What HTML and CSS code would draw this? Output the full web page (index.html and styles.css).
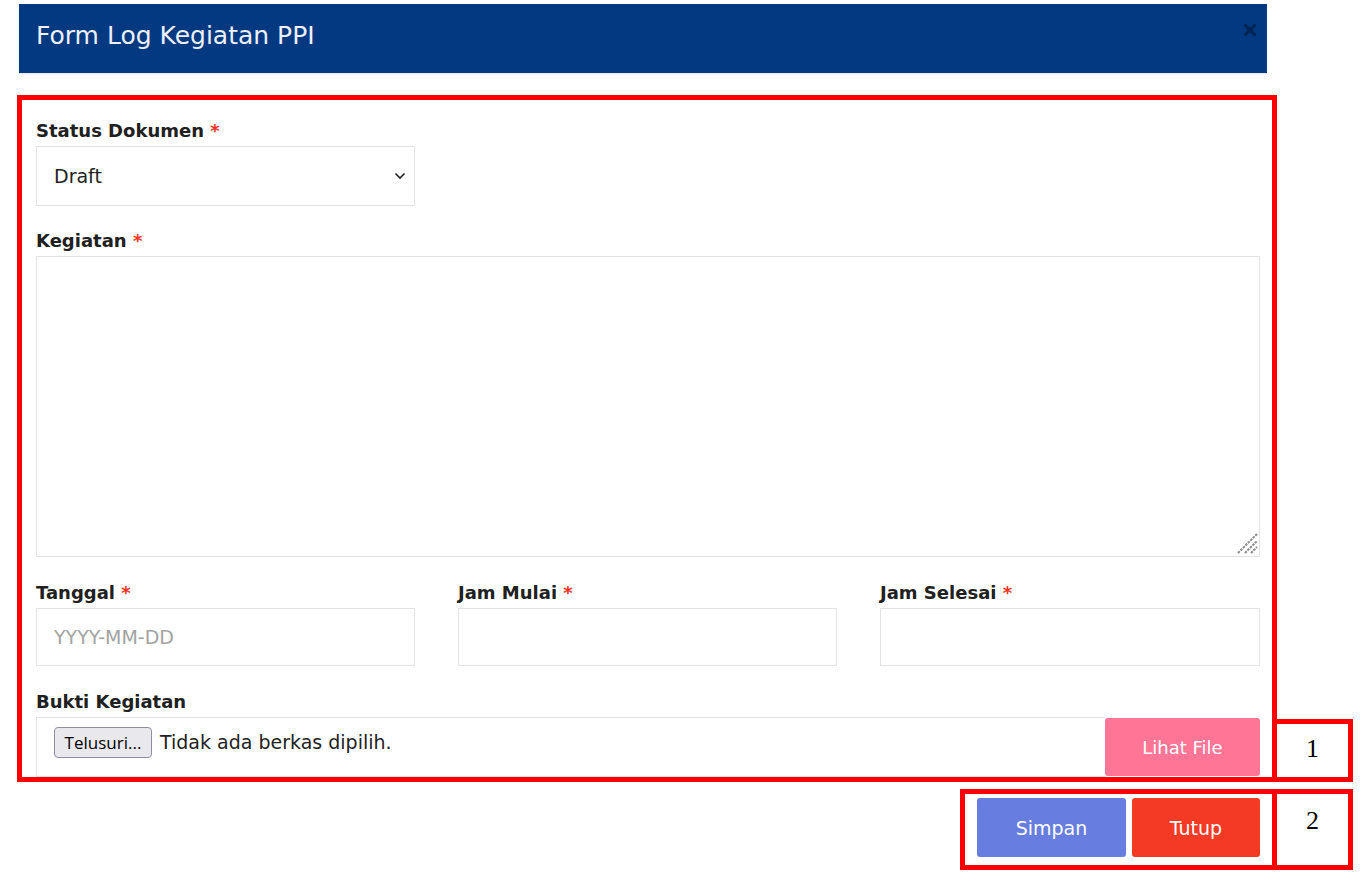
FILE: index.html
```html
<!DOCTYPE html>
<html lang="id">
<head>
<meta charset="utf-8">
<title>Form Log Kegiatan PPI</title>
<link rel="stylesheet" href="styles.css">
</head>
<body>
<div class="modal">
  <div class="modal-header">
    <h5 class="modal-title">Form Log Kegiatan PPI</h5>
    <button class="close" type="button" aria-label="Close">
      <svg width="16" height="16" viewBox="0 0 16 16"><path d="M2.5 2.5 L13.5 13.5 M13.5 2.5 L2.5 13.5" stroke="#000" stroke-width="3.2" stroke-linecap="butt"/></svg>
    </button>
  </div>
  <div class="modal-body">
    <div class="form-group first">
      <label class="label">Status Dokumen <span class="req">*</span></label>
      <div class="select-wrap">
        <select class="control select">
          <option>Draft</option>
        </select>
        <svg class="chevron" width="12" height="8" viewBox="0 0 12 8"><path d="M1.5 1.5 L6 6 L10.5 1.5" fill="none" stroke="#222" stroke-width="1.6"/></svg>
      </div>
    </div>
    <div class="form-group">
      <label class="label">Kegiatan <span class="req">*</span></label>
      <div class="textarea-wrap">
        <textarea class="control textarea"></textarea>
        <svg class="grip" width="21" height="21" viewBox="0 0 21 21"><path d="M1 20 L20 1 M8 20 L20 8 M14 20 L20 14" fill="none" stroke="#8a8a8a" stroke-width="2" stroke-dasharray="2.5 1"/></svg>
      </div>
    </div>
    <div class="row">
      <div class="form-group">
        <label class="label">Tanggal <span class="req">*</span></label>
        <input class="control input" type="text" placeholder="YYYY-MM-DD">
      </div>
      <div class="form-group">
        <label class="label">Jam Mulai <span class="req">*</span></label>
        <input class="control input" type="text">
      </div>
      <div class="form-group">
        <label class="label">Jam Selesai <span class="req">*</span></label>
        <input class="control input" type="text">
      </div>
    </div>
    <div class="form-group last">
      <label class="label">Bukti Kegiatan</label>
      <div class="file-group">
        <div class="file-input">
          <button class="browse" type="button">Telusuri...</button>
          <span class="file-text">Tidak ada berkas dipilih.</span>
        </div>
        <button class="btn btn-pink" type="button">Lihat File</button>
      </div>
    </div>
  </div>
  <div class="modal-footer">
    <button class="btn btn-primary" type="button">Simpan</button>
    <button class="btn btn-danger" type="button">Tutup</button>
  </div>
</div>

<div class="mark mark-body"></div>
<div class="mark mark-num1">1</div>
<div class="mark mark-footer"></div>
<div class="mark mark-num2">2</div>
</body>
</html>
```

FILE: styles.css
```css
* { box-sizing: border-box; }
html, body { margin: 0; padding: 0; background: #fff; }
body {
  font-family: "DejaVu Sans", "Open Sans", sans-serif;
  color: #212121;
  width: 1361px;
  height: 885px;
  overflow: hidden;
  position: relative;
}
.modal {
  margin: 4px 0 0 19px;
  width: 1248px;
}
.modal-header {
  height: 70px;
  background: #023981;
  border-bottom: 1px solid #e4e6ea;
  display: flex;
  align-items: flex-start;
  justify-content: space-between;
  padding: 0 9px 0 17px;
}
.modal-title {
  margin: 17px 0 0 0;
  font-size: 25px;
  line-height: 29px;
  font-weight: 400;
  color: #eef0f6;
}
.close {
  margin-top: 18px;
  padding: 0;
  border: 0;
  background: none;
  opacity: 0.33;
  width: 16px;
  height: 16px;
  display: block;
}
.close svg { display: block; }
.modal-body {
  padding: 43px 7px 0 17px;
  height: 709px;
  overflow: hidden;
}
.form-group { margin-bottom: 22px; display: flex; flex-direction: column; }
.form-group.first { margin-bottom: 21px; }
.form-group.last { margin-bottom: 0; }
.label {
  font-size: 18px;
  line-height: 24px;
  font-weight: 700;
  padding-top: 2px;
  margin-bottom: 3px;
  color: #202020;
}
.req { color: #f4331f; }
.control {
  display: block;
  width: 100%;
  height: 58px;
  border: 1px solid #e3e3e3;
  border-radius: 0;
  background: #fff;
  font-family: inherit;
  font-size: 19px;
  color: #222;
  padding: 0 17px;
  outline: none;
}
.control::placeholder { color: #a3a3a3; }
.select-wrap { position: relative; width: 379px; }
.select { appearance: none; -webkit-appearance: none; height: 60px; }
.chevron { position: absolute; right: 9px; top: 26px; pointer-events: none; }
.textarea-wrap { position: relative; }
.textarea { height: 301px; resize: none; padding: 10px 17px; }
.grip { position: absolute; right: 2px; bottom: 3px; pointer-events: none; }
.row {
  display: grid;
  grid-template-columns: 379px 379px 380px;
  column-gap: 43px;
}
.file-group {
  display: flex;
  height: 60px;
}
.file-input {
  flex: 1;
  border: 1px solid #e3e3e3;
  border-right: 0;
  display: flex;
  align-items: flex-start;
  padding: 9px 17px 0 17px;
}
.browse {
  height: 31px;
  width: 98px;
  padding: 0;
  background: #e9e9ed;
  border: 1px solid #8f8f9d;
  border-radius: 4px;
  font-family: "Open Sans", "Liberation Sans", sans-serif;
  font-size: 17px;
  color: #000;
}
.file-text {
  margin-left: 8px;
  font-size: 19px;
  line-height: 31px;
  color: #222;
}
.btn {
  border: 0;
  border-radius: 3px;
  color: #fff;
  font-family: inherit;
  font-size: 19px;
  font-weight: 400;
  height: 59px;
  padding: 0;
}
.btn-pink { width: 155px; background: #fe7596; height: 58px; margin-top: 1px; font-size: 18px; }
.modal-footer {
  display: flex;
  justify-content: flex-end;
  gap: 6px;
  padding: 15px 7px 0 0;
}
.btn-primary { width: 149px; background: #677ddf; }
.btn-danger { width: 128px; background: #f43a25; }

.mark {
  position: absolute;
  border: 5px solid #ff0000;
  pointer-events: none;
}
.mark-body { left: 17px; top: 95px; width: 1260px; height: 687px; }
.mark-num1 {
  left: 1272px; top: 719px; width: 81px; height: 63px;
  font-family: "Liberation Serif", "Times New Roman", serif;
  font-size: 26px; color: #000;
  display: flex; align-items: center; justify-content: center;
  padding-bottom: 4px;
}
.mark-footer { left: 960px; top: 789px; width: 317px; height: 81px; }
.mark-num2 {
  left: 1272px; top: 789px; width: 81px; height: 81px;
  font-family: "Liberation Serif", "Times New Roman", serif;
  font-size: 26px; color: #000;
  display: flex; justify-content: center;
  padding-top: 12px;
}
```
